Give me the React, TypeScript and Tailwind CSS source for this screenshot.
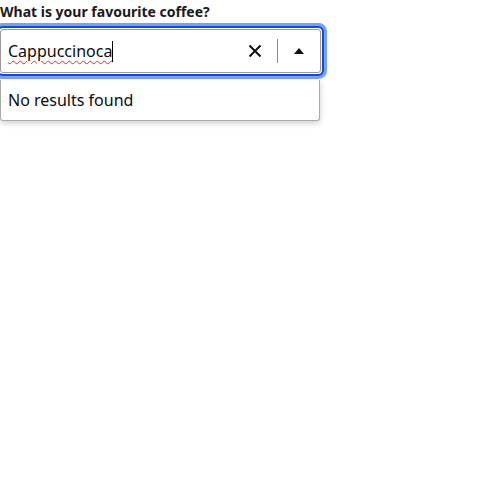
export default function App() {
  return (
    <div className="bg-white w-[500px] h-[500px]" style={{ fontFamily: '"Noto Sans", sans-serif' }}>
      <div className="w-[320px]">
        <label className="block pt-[2px] text-[14px] leading-[20px] font-bold text-[#1a1a1a]">
          What is your favourite coffee?
        </label>
        <div className="mt-[7px] relative">
          <div className="flex items-center h-[44px] w-[321px] border border-[#9a9a9a] rounded-[3px] bg-white shadow-[0_0_0_1px_#fff,0_0_0_3px_#0b4be0,0_0_0_6px_#7f9de9]">
            <div className="flex-1 pl-[7px] text-[16px] text-[#0b0c0c] leading-[24px] flex items-center">
              <span className="underline decoration-wavy decoration-[#e03030] decoration-[1px] underline-offset-[3px]">Cappuccinoca</span>
              <span className="inline-block w-[1px] h-[21px] bg-black"></span>
            </div>
            <div className="w-[32px] flex items-center justify-center mr-[2px]">
              <svg width="14" height="14" viewBox="0 0 14 14">
                <path d="M1.5 1.5 L12.5 12.5 M12.5 1.5 L1.5 12.5" stroke="#111" strokeWidth="2" />
              </svg>
            </div>
            <div className="w-[1px] h-[24px] bg-[#8a8a8a] ml-[4px]"></div>
            <div className="w-[42px] flex items-center justify-center">
              <svg width="10" height="6" viewBox="0 0 10 6">
                <path d="M0 6 L5 0 L10 6 Z" fill="#111" />
              </svg>
            </div>
          </div>
        </div>
        <div className="mt-[7px] h-[41px] w-[320px] border border-[#aaa] border-t-0 rounded-b-[3px] shadow-[0_2px_6px_rgba(0,0,0,0.2)] pl-[7px] flex items-center text-[16px] text-[#0b0c0c]">
          No results found
        </div>
      </div>
    </div>
  );
}
